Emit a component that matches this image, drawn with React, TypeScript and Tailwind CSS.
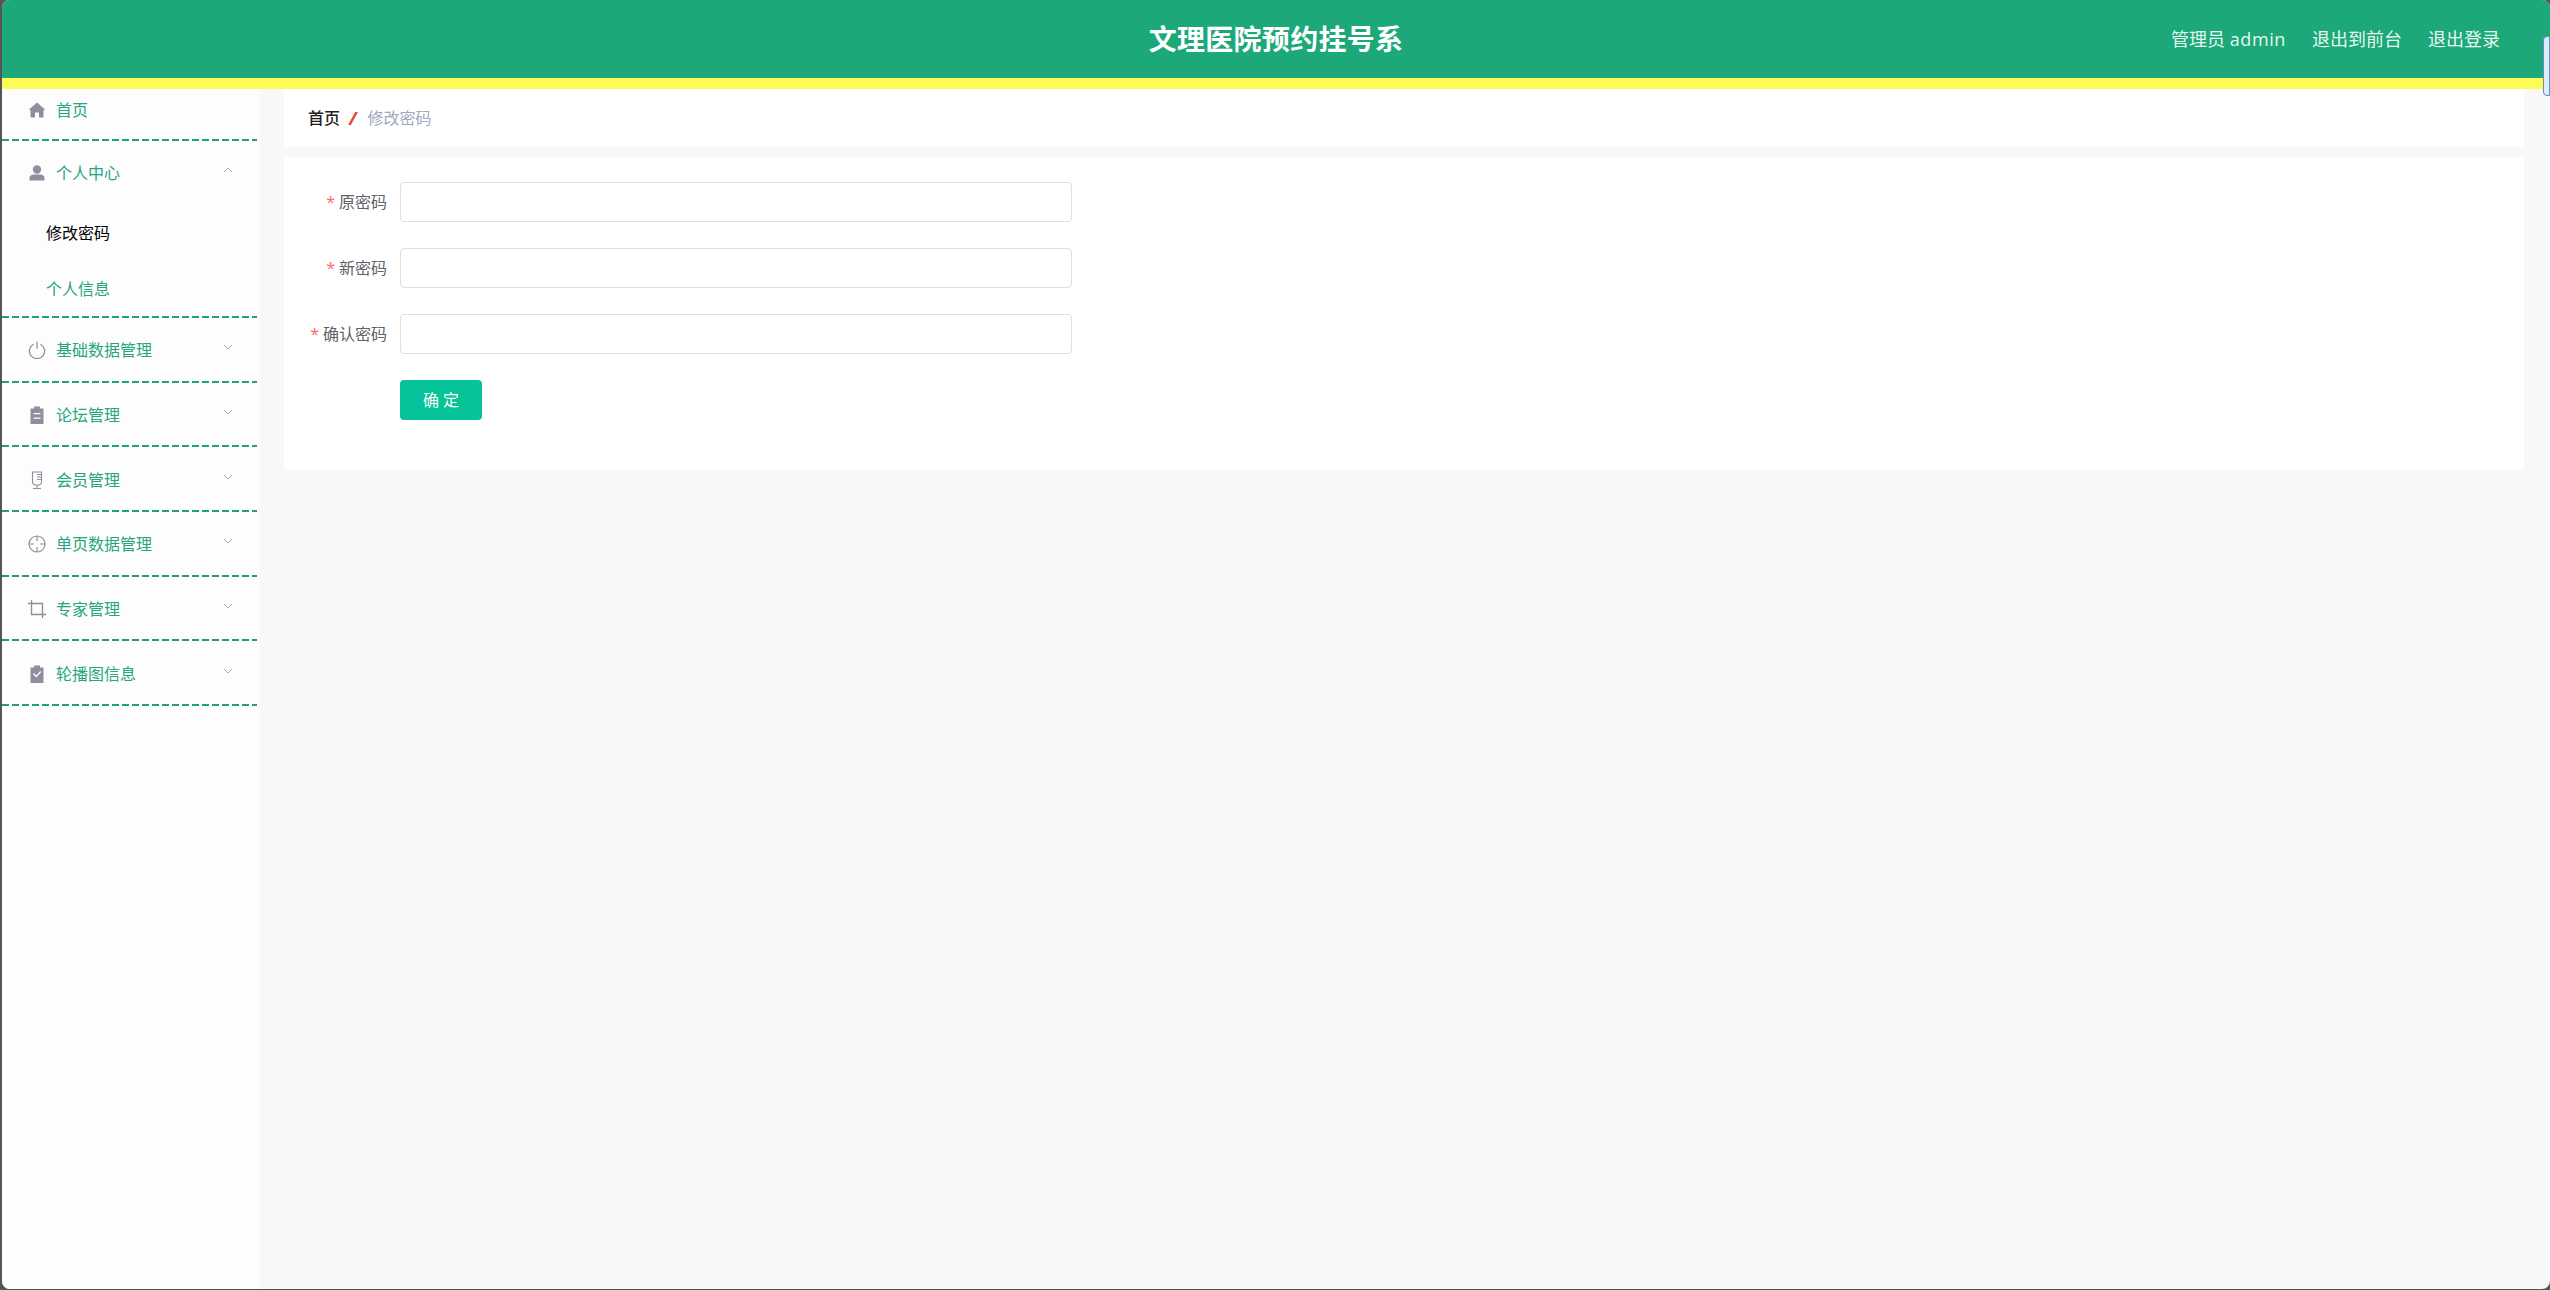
import React from "react";

const FONT = "font-['Open_Sans','Noto_Sans_CJK_SC',sans-serif]";

const icon = "w-[18px] h-[18px] shrink-0 text-[#8f8d9e]";

const Home = () => (
  <svg viewBox="0 0 18 18" className={icon} fill="currentColor">
    <path d="M9 1.500 17 8.500 15.500 9.600V16.500H11V11.500H7V16.500H2.500V9.600L1 8.500Z" />
  </svg>
);
const User = () => (
  <svg viewBox="0 0 18 18" className={icon} fill="currentColor">
    <circle cx="9" cy="5.500" r="4.200" />
    <path d="M1.500 16.500V14c0-2 2-3.500 4-3.500h7c2 0 4 1.500 4 3.500v2.500Z" />
  </svg>
);
const Power = () => (
  <svg viewBox="0 0 18 18" className={icon} fill="none" stroke="currentColor" strokeWidth="1.200">
    <path d="M5.600 3.200a7.600 7.600 0 1 0 6.800 0" />
    <path d="M9 .8v7" />
  </svg>
);
const Order = () => (
  <svg viewBox="0 0 18 18" className={icon} fill="currentColor">
    <path d="M6 0.500h6v2h3.500v15.500h-13V2.500H6Z" />
    <path d="M5.500 7h7v1.200h-7zM5.500 11.500h7v1.200h-7z" fill="#fff" />
  </svg>
);
const Mic = () => (
  <svg viewBox="0 0 18 18" className={icon} fill="none" stroke="currentColor" strokeWidth="1.100">
    <path d="M4.500 1h9v10a3 3 0 0 1-3 3h-3a3 3 0 0 1-3-3Z" />
    <path d="M9 3.500h4.500M9 6h4.500M9 8.500h4.500M9 14V17.500M5 17.500h8" />
  </svg>
);
const Aim = () => (
  <svg viewBox="0 0 18 18" className={icon} fill="none" stroke="currentColor" strokeWidth="1.200">
    <circle cx="9" cy="9" r="8" />
    <path d="M9 1v5M9 12v5M1 9h5M12 9h5" />
  </svg>
);
const Crop = () => (
  <svg viewBox="0 0 18 18" className={icon} fill="none" stroke="currentColor" strokeWidth="1.300">
    <path d="M3.500 0v14.500h14.500" />
    <path d="M0 3.500h14.500V18" />
  </svg>
);
const Claim = () => (
  <svg viewBox="0 0 18 18" className={icon} fill="currentColor">
    <path d="M6 0.500h6v2h3.500v15.500h-13V2.500H6Z" />
    <path d="M5.500 8.500 8.200 11.500 12.800 6.500" fill="none" stroke="#fff" strokeWidth="1.300" />
  </svg>
);

const Chevron = ({ up = false }: { up?: boolean }) => (
  <svg viewBox="0 0 12 12" className="w-[12px] h-[12px] text-[#a9a9a9] mb-[6px]" fill="none" stroke="currentColor" strokeWidth="1">
    <path d={up ? "M2 8 6 4 10 8" : "M2 4 6 8 10 4"} />
  </svg>
);

const Dash = () => (
  <div className="w-[255px] h-[2px] bg-[repeating-linear-gradient(90deg,#1f9f7a_0,#1f9f7a_7px,transparent_7px,transparent_10px)]" />
);

const items: { label: string; Icon: React.FC }[] = [
  { label: "基础数据管理", Icon: Power },
  { label: "论坛管理", Icon: Order },
  { label: "会员管理", Icon: Mic },
  { label: "单页数据管理", Icon: Aim },
  { label: "专家管理", Icon: Crop },
  { label: "轮播图信息", Icon: Claim },
];

const Row = ({ label, Icon, up }: { label: string; Icon: React.FC; up?: boolean }) => (
  <div className="h-[62.670px] flex items-center pt-[2px] pl-[26px] pr-[26px]">
    <Icon />
    <span className="ml-[10px] text-[16px] text-[#27a57f] flex-1">{label}</span>
    <Chevron up={up} />
  </div>
);

const Field = ({ label }: { label: string }) => (
  <div className="flex items-center h-[40px] mb-[26px]">
    <label className="w-[103px] text-right text-[16px] text-[#606266]">
      <span className="text-[#f56c6c] mr-[4px]">*</span>
      {label}
    </label>
    <div className="ml-[13px] w-[672px] h-[40px] rounded-[4px] border border-[#dcdfe6] bg-white" />
  </div>
);

export default function App() {
  return (
    <div className={`${FONT} w-[2550px] h-[1290px] bg-[#555555] relative overflow-hidden`}>
      <div className="absolute inset-0 left-[2px] bottom-[1px] bg-[#f8f8f8] rounded-[8px] overflow-hidden flex flex-col">
        <header className="h-[89px] shrink-0 bg-[#1ca878] border-b-[11px] border-[#fdfb56] flex items-center relative">
          <h1 className="flex-1 text-center text-[28px] tracking-[0.300px] font-bold text-white">文理医院预约挂号系</h1>
          <nav className="absolute right-[50px] top-0 h-[78px] flex items-center gap-[26px] text-[18px] text-[#e6f7f0]">
            <span>管理员 <span className="tracking-[0.600px]">admin</span></span>
            <span>退出到前台</span>
            <span>退出登录</span>
          </nav>
        </header>
        <div className="flex flex-1 min-h-0">
          <aside className="w-[258px] shrink-0 bg-[#fdfdfd]">
            <div className="h-[50px] flex items-center pl-[26px] pb-[8px]">
              <Home />
              <span className="ml-[10px] text-[16px] text-[#27a57f]">首页</span>
            </div>
            <Dash />
            <Row label="个人中心" Icon={User} up />
            <div className="h-[56.250px] flex items-center pl-[44px] pt-[2px] text-[16px] text-black">修改密码</div>
            <div className="h-[56.250px] flex items-center pl-[44px] pt-[2px] text-[16px] text-[#27a57f]">个人信息</div>
            <Dash />
            {items.map((it) => (
              <React.Fragment key={it.label}>
                <Row label={it.label} Icon={it.Icon} />
                <Dash />
              </React.Fragment>
            ))}
          </aside>
          <main className="flex-1 pl-[24px] pr-[26px]">
            <div className="h-[58px] bg-white flex items-center pl-[24px] text-[16px]">
              <span className="text-[#1f1f1f] font-medium">首页</span>
              <span className="ml-[9px] mr-[11px] text-[18px] leading-none text-[#e8431f] font-bold italic">/</span>
              <span className="text-[#a3a6c0]">修改密码</span>
            </div>
            <div className="mt-[10px] h-[313px] bg-white pt-[25px]">
              <Field label="原密码" />
              <Field label="新密码" />
              <Field label="确认密码" />
              <button className="ml-[116px] w-[82px] h-[40px] rounded-[4px] bg-[#06c39a] text-white text-[16px]">确 定</button>
            </div>
          </main>
        </div>
      </div>
      <div className="absolute right-0 top-[36px] w-[7px] h-[60px] bg-[#e1ebfb] border border-[#5b8fd0] rounded-l-[4px]" />
    </div>
  );
}
